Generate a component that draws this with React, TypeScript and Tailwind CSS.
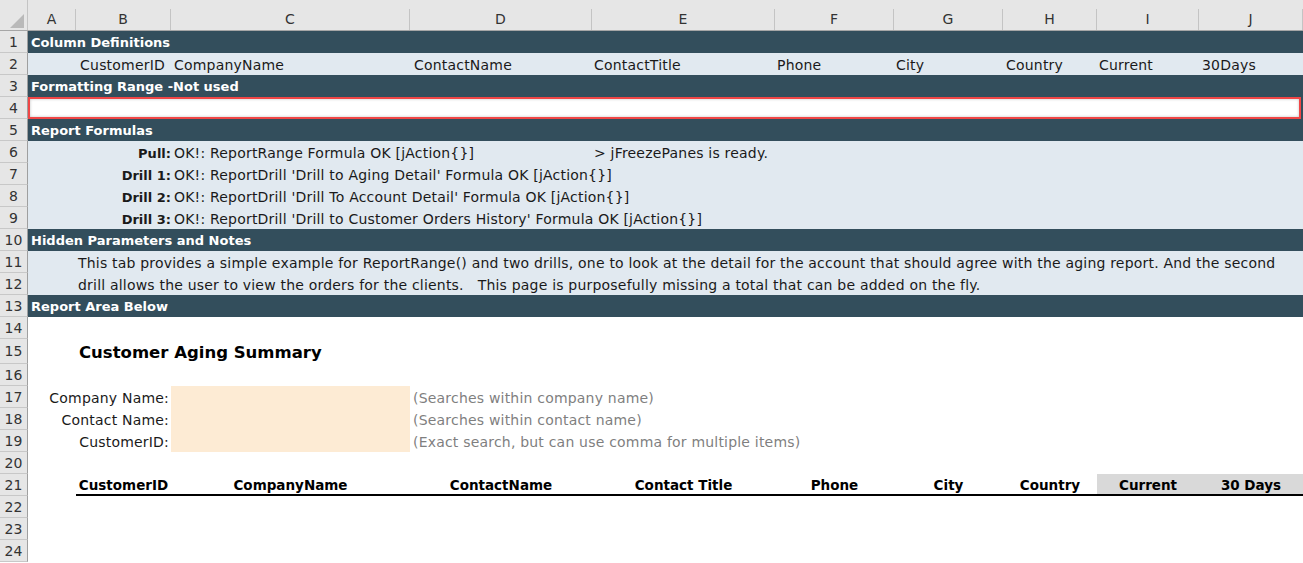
import React from "react";

const COLS = ["A", "B", "C", "D", "E", "F", "G", "H", "I", "J"];

// shared column track for header and body
const GRID =
  "grid grid-cols-[48px_95px_239px_182px_183px_119px_109px_94px_102px_104px]";

function Row({
  n,
  h = "h-[22px]",
  bg = "bg-white",
  children,
}: {
  n: number;
  h?: string;
  bg?: string;
  children?: React.ReactNode;
}) {
  return (
    <div className={`flex ${h}`}>
      <div className="flex w-[28px] shrink-0 items-center justify-center border-r border-b border-r-[#9f9f9f] border-b-[#c8c8c8] bg-[#e6e6e6] pt-[1px] text-[14px] tracking-normal text-[#333]">
        {n}
      </div>
      <div className={`${GRID} relative flex-1 ${bg}`}>{children}</div>
    </div>
  );
}

function Band({ n, title }: { n: number; title: string }) {
  return (
    <Row n={n} bg="bg-[#334e5c]">
      <div className="col-span-10 flex items-center whitespace-nowrap pl-[3px] pt-[1px] text-[13px] font-bold tracking-normal text-white">
        {title}
      </div>
    </Row>
  );
}

function Cell({
  c,
  className = "",
  children,
}: {
  c: string;
  className?: string;
  children?: React.ReactNode;
}) {
  return (
    <div className={`${c} flex items-center whitespace-nowrap pt-[2px] ${className}`}>
      {children}
    </div>
  );
}

function FormulaRow({ n, label, text }: { n: number; label: string; text: string }) {
  return (
    <Row n={n} bg="bg-[#e1e9f0]">
      <Cell c="col-span-2" className="justify-end text-[13px] font-bold tracking-normal">
        {label}
      </Cell>
      <Cell c="col-span-8" className="pl-[3px]">
        {text}
      </Cell>
    </Row>
  );
}

function SearchRow({ n, label, hint }: { n: number; label: string; hint: string }) {
  return (
    <Row n={n}>
      <Cell c="col-span-2" className="justify-end pr-[2px]">
        {label}
      </Cell>
      <div className="bg-[#fdebd4]" />
      <Cell c="col-span-7" className="pl-[3px] text-[#7f7f7f]">
        {hint}
      </Cell>
    </Row>
  );
}

const defs = [
  ["CustomerID", "justify-end pr-[6px]"],
  ["CompanyName", "pl-[3px]"],
  ["ContactName", "pl-[4px]"],
  ["ContactTitle", "pl-[2px]"],
  ["Phone", "pl-[2px]"],
  ["City", "pl-[2px]"],
  ["Country", "pl-[3px]"],
  ["Current", "pl-[2px]"],
  ["30Days", "pl-[3px]"],
];

const reportHeads = [
  "CustomerID",
  "CompanyName",
  "ContactName",
  "Contact Title",
  "Phone",
  "City",
  "Country",
  "Current",
  "30 Days",
];

export default function App() {
  return (
    <div className="h-[563px] w-[1303px] overflow-hidden bg-white font-['DejaVu_Sans',sans-serif] text-[14px] tracking-[0.2px] text-[#1a1a1a]">
      {/* column letters */}
      <div className="flex h-[31px] items-end border-b border-[#a6a6a6] bg-[#e6e6e6]">
        <div className="relative h-full w-[28px] shrink-0 border-r border-[#c4c4c4]">
          <svg className="absolute left-[10px] top-[14px]" width="14" height="14" viewBox="0 0 14 14">
            <polygon points="14,0 14,14 0,14" fill="#b9b9b9" />
          </svg>
        </div>
        <div className={`${GRID} h-[21px] flex-1`}>
          {COLS.map((c) => (
            <div
              key={c}
              className="flex items-center justify-center border-r border-[#c4c4c4] text-[14px] tracking-normal text-[#333]"
            >
              {c}
            </div>
          ))}
        </div>
      </div>

      <Band n={1} title="Column Definitions" />
      <Row n={2} bg="bg-[#e1e9f0]">
        <div />
        {defs.map(([t, cls]) => (
          <Cell key={t} c="" className={cls}>
            {t}
          </Cell>
        ))}
      </Row>
      <Band n={3} title="Formatting Range -Not used" />
      <Row n={4} bg="bg-[#334e5c]">
        <div className="col-span-10 mr-[2px] border-2 border-[#f04646] bg-white shadow-[inset_0_0_3px_rgba(0,0,0,0.25)]" />
      </Row>
      <Band n={5} title="Report Formulas" />
      <Row n={6} bg="bg-[#e1e9f0]">
        <Cell c="col-span-2" className="justify-end text-[13px] font-bold tracking-normal">
          Pull:
        </Cell>
        <Cell c="col-span-2" className="pl-[3px]">
          OK!: ReportRange Formula OK [jAction{"{}"}]
        </Cell>
        <Cell c="col-span-6" className="pl-[2px]">
          &gt; jFreezePanes is ready.
        </Cell>
      </Row>
      <FormulaRow n={7} label="Drill 1:" text="OK!: ReportDrill 'Drill to Aging Detail' Formula OK [jAction{}]" />
      <FormulaRow n={8} label="Drill 2:" text="OK!: ReportDrill 'Drill To Account Detail' Formula OK [jAction{}]" />
      <FormulaRow
        n={9}
        label="Drill 3:"
        text="OK!: ReportDrill 'Drill to Customer Orders History' Formula OK [jAction{}]"
      />
      <Band n={10} title="Hidden Parameters and Notes" />
      <Row n={11} bg="bg-[#e1e9f0]">
        <div />
        <Cell c="col-span-9" className="pl-[2px]">
          This tab provides a simple example for ReportRange() and two drills, one to look at the detail for the
          account that should agree with the aging report. And the second
        </Cell>
      </Row>
      <Row n={12} bg="bg-[#e1e9f0]">
        <div />
        <Cell c="col-span-9" className="pl-[2px]">
          drill allows the user to view the orders for the clients.&nbsp;&nbsp; This page is purposefully missing a
          total that can be added on the fly.
        </Cell>
      </Row>
      <Band n={13} title="Report Area Below" />
      <Row n={14} />
      <Row n={15} h="h-[25px]">
        <div />
        <Cell c="col-span-9" className="pl-[3px] text-[16.5px] font-bold tracking-normal text-black">
          Customer Aging Summary
        </Cell>
      </Row>
      <Row n={16} />
      <SearchRow n={17} label="Company Name:" hint="(Searches within company name)" />
      <SearchRow n={18} label="Contact Name:" hint="(Searches within contact name)" />
      <SearchRow n={19} label="CustomerID:" hint="(Exact search, but can use comma for multiple items)" />
      <Row n={20} />
      <Row n={21}>
        <div />
        {reportHeads.map((t, i) => (
          <div
            key={t}
            className={`flex items-center justify-center whitespace-nowrap pt-[1px] text-[13.5px] font-bold tracking-normal text-black shadow-[inset_0_-2px_0_#000] ${
              i >= 7 ? "bg-[#d9d9d9]" : ""
            }`}
          >
            {t}
          </div>
        ))}
      </Row>
      <Row n={22} />
      <Row n={23} />
      <Row n={24} />
    </div>
  );
}
